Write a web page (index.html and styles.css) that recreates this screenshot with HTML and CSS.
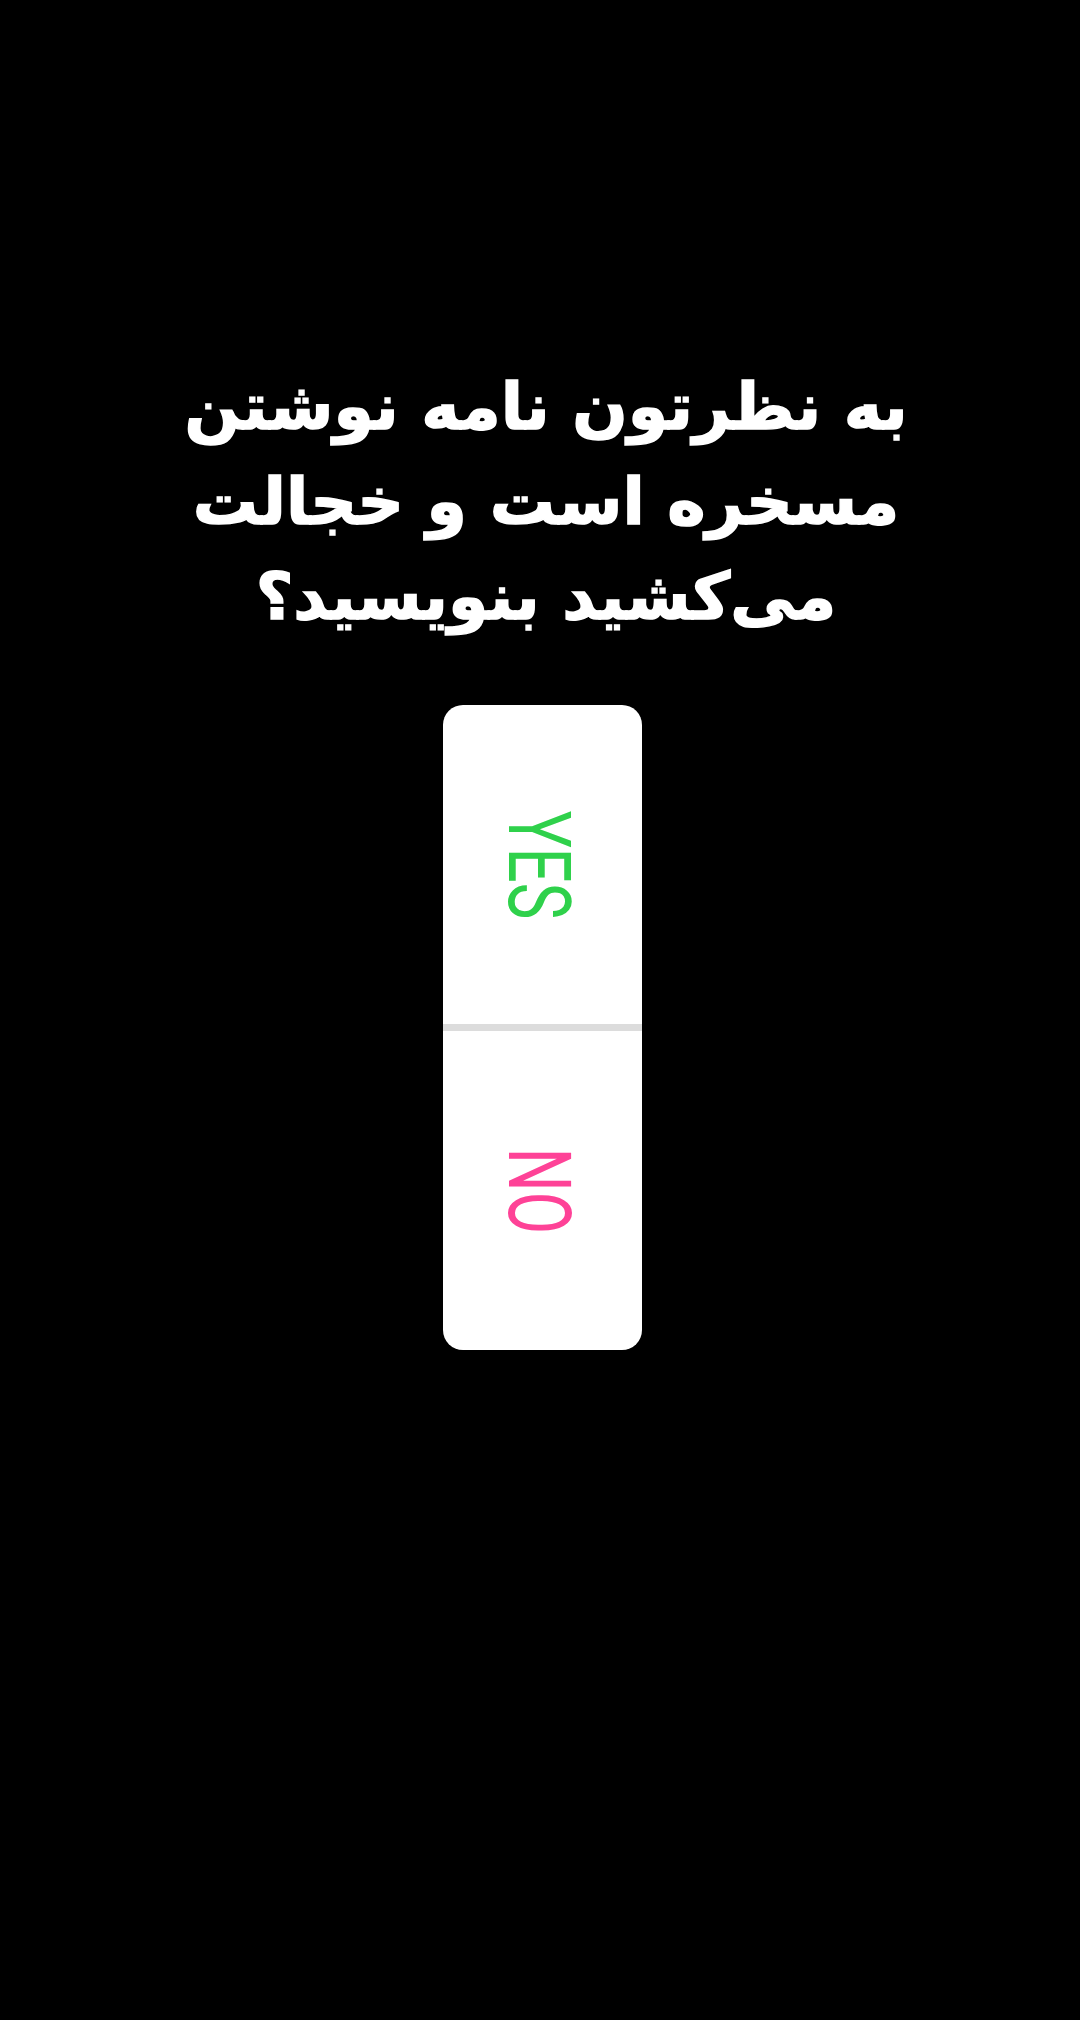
FILE: index.html
```html
<!DOCTYPE html>
<html lang="fa">
<head>
<meta charset="utf-8">
<link rel="stylesheet" href="styles.css">
</head>
<body>
<main class="story">
  <h1 class="question" dir="rtl">به نظرتون نامه نوشتن<br>مسخره است و خجالت<br>می‌کشید بنویسید؟</h1>
  <div class="poll">
    <div class="option"><span class="label yes">YES</span></div>
    <div class="divider"></div>
    <div class="option"><span class="label no">NO</span></div>
  </div>
</main>
</body>
</html>
```
FILE: styles.css
```css
html, body {
  margin: 0;
  padding: 0;
  background: #000;
}
.story {
  width: 1080px;
  height: 2020px;
  display: flex;
  flex-direction: column;
  align-items: center;
  padding-top: 359px;
  box-sizing: border-box;
}
.question {
  margin: 0 0 0 12px;
  color: #fff;
  font-family: "DejaVu Sans", sans-serif;
  font-weight: bold;
  font-size: 65px;
  line-height: 95px;
  text-align: center;
  -webkit-text-stroke: 1.5px #fff;
}
.poll {
  margin: 61px 0 0 5px;
  width: 199px;
  height: 645px;
  background: #fff;
  border-radius: 20px;
  display: flex;
  flex-direction: column;
  overflow: hidden;
}
.option {
  flex: 1;
  display: flex;
  align-items: center;
  justify-content: center;
}
.divider {
  height: 7px;
  background: #dcdcdc;
}
.label {
  display: inline-block;
  font-family: Roboto, sans-serif;
  font-weight: 400;
  font-size: 88px;
  line-height: 1;
  margin-right: 8px;
  transform: rotate(90deg) scaleX(0.7);
}
.yes { color: #2fd14b; }
.no { color: #fe4297; }
```
